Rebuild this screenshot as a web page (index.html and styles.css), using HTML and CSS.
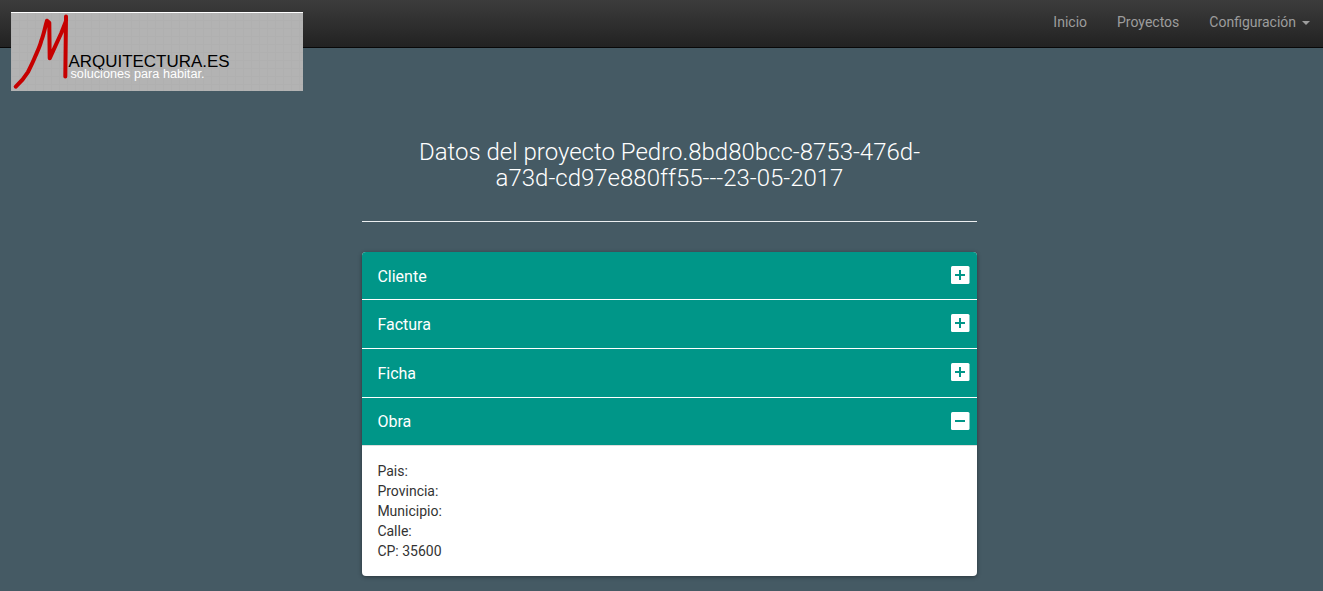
FILE: index.html
```html
<!DOCTYPE html>
<html lang="es">
<head>
<meta charset="utf-8">
<title>Datos del proyecto</title>
<link rel="stylesheet" href="styles.css">
</head>
<body>
<header class="navbar">
  <a class="brand">
    <svg class="logo" width="292" height="79" viewBox="0 0 292 79" role="img" aria-label="Marquitectura.es">
      <defs>
        <pattern id="weave" width="8" height="8" patternUnits="userSpaceOnUse">
          <rect width="8" height="8" fill="#b3b3b3"/>
          <path d="M0 .5H8M.5 0V8" stroke="#b0b0b0"/>
        </pattern>
      </defs>
      <rect width="292" height="79" fill="url(#weave)"/>
      <rect width="292" height="1" fill="#fff"/>
      <path d="M4.700 74.700C10 70 14 65 17 60C20 54 22 50 24.300 44.300C27 38 29 34 30.300 28.700C33 22 34 15 36 8.700L38.300 10.700L38.700 46.300L43.700 35.300L50.300 21L55 9V4.500L54.300 64.500" fill="none" stroke="#c60000" stroke-width="4" stroke-linecap="round" stroke-linejoin="round"/>
      <text class="logo-name" x="57.500" y="55" textLength="161" lengthAdjust="spacingAndGlyphs">ARQUITECTURA.ES</text>
      <text class="logo-tag" x="59.500" y="66" textLength="134" lengthAdjust="spacingAndGlyphs">soluciones para habitar.</text>
    </svg>
  </a>
  <nav class="menu">
    <a class="menu-link">Inicio</a>
    <a class="menu-link">Proyectos</a>
    <a class="menu-link">Configuración<span class="caret"></span></a>
  </nav>
</header>
<main class="content">
  <h1 class="title">Datos del proyecto Pedro.8bd80bcc-8753-476d-<br>a73d-cd97e880ff55---23-05-2017</h1>
  <section class="accordion">
    <div class="row row-first"><span class="label">Cliente</span><svg class="toggle" width="19" height="18" viewBox="0 0 19 18"><rect width="18.500" height="18" rx="1.500" fill="#fff"/><path d="M4 9H14M9 4V14" stroke="#009688" stroke-width="2"/></svg></div>
    <div class="row"><span class="label">Factura</span><svg class="toggle" width="19" height="18" viewBox="0 0 19 18"><rect width="18.500" height="18" rx="1.500" fill="#fff"/><path d="M4 9H14M9 4V14" stroke="#009688" stroke-width="2"/></svg></div>
    <div class="row"><span class="label">Ficha</span><svg class="toggle" width="19" height="18" viewBox="0 0 19 18"><rect width="18.500" height="18" rx="1.500" fill="#fff"/><path d="M4 9H14M9 4V14" stroke="#009688" stroke-width="2"/></svg></div>
    <div class="row row-open"><span class="label">Obra</span><svg class="toggle" width="19" height="18" viewBox="0 0 19 18"><rect width="18.500" height="18" rx="1.500" fill="#fff"/><path d="M4 9H14" stroke="#009688" stroke-width="2"/></svg></div>
    <div class="details">
      <div>Pais:</div>
      <div>Provincia:</div>
      <div>Municipio:</div>
      <div>Calle:</div>
      <div>CP: 35600</div>
    </div>
  </section>
</main>
</body>
</html>
```
FILE: styles.css
```css
* { box-sizing: border-box; }
body {
  margin: 0;
  height: 591px;
  overflow: hidden;
  background: #455a64;
  color: #333;
  font: 14px/20px Roboto, sans-serif;
}
.navbar {
  display: flex;
  justify-content: space-between;
  align-items: flex-start;
  height: 48px;
  padding: 12px 13px 0 11px;
  background: linear-gradient(#3c3c3c, #222);
  border-bottom: 1px solid #080808;
}
.logo { display: block; }
.logo-name { font: 16px "Liberation Sans", Arial, sans-serif; fill: #000; }
.logo-tag { font: 12.5px "Liberation Sans", Arial, sans-serif; fill: #fff; }
.menu { display: flex; gap: 30px; }
.menu-link {
  display: flex;
  align-items: center;
  color: #9d9d9d;
}
.caret {
  margin: 2px 0 0 6px;
  border: 4px solid transparent;
  border-top-color: #9d9d9d;
  border-bottom: 0;
}
.content {
  width: 615px;
  margin-left: 362px;
  padding-top: 91px;
}
.title {
  height: 83px;
  margin: 0 0 30px;
  border-bottom: 1px solid #eceff1;
  color: #fff;
  font-size: 24px;
  font-weight: 300;
  line-height: 26px;
  text-align: center;
}
.accordion {
  border-radius: 4px;
  overflow: hidden;
  background: #fff;
  box-shadow: 0 1px 4px rgba(0, 0, 0, .4);
}
.row {
  display: flex;
  justify-content: space-between;
  align-items: flex-start;
  height: 49px;
  padding: 14px 7px 0 15.4px;
  background: #009688;
  border-bottom: 1px solid #fff;
  color: #fff;
  font-size: 16px;
}
.label { padding-top: 1px; }
.row-first { height: 48px; }
.row-open { height: 48px; border-bottom-color: #ddd; }
.row-open .label { padding-top: 0; }
.details {
  height: 130px;
  padding: 15px 15.4px;
}
```
